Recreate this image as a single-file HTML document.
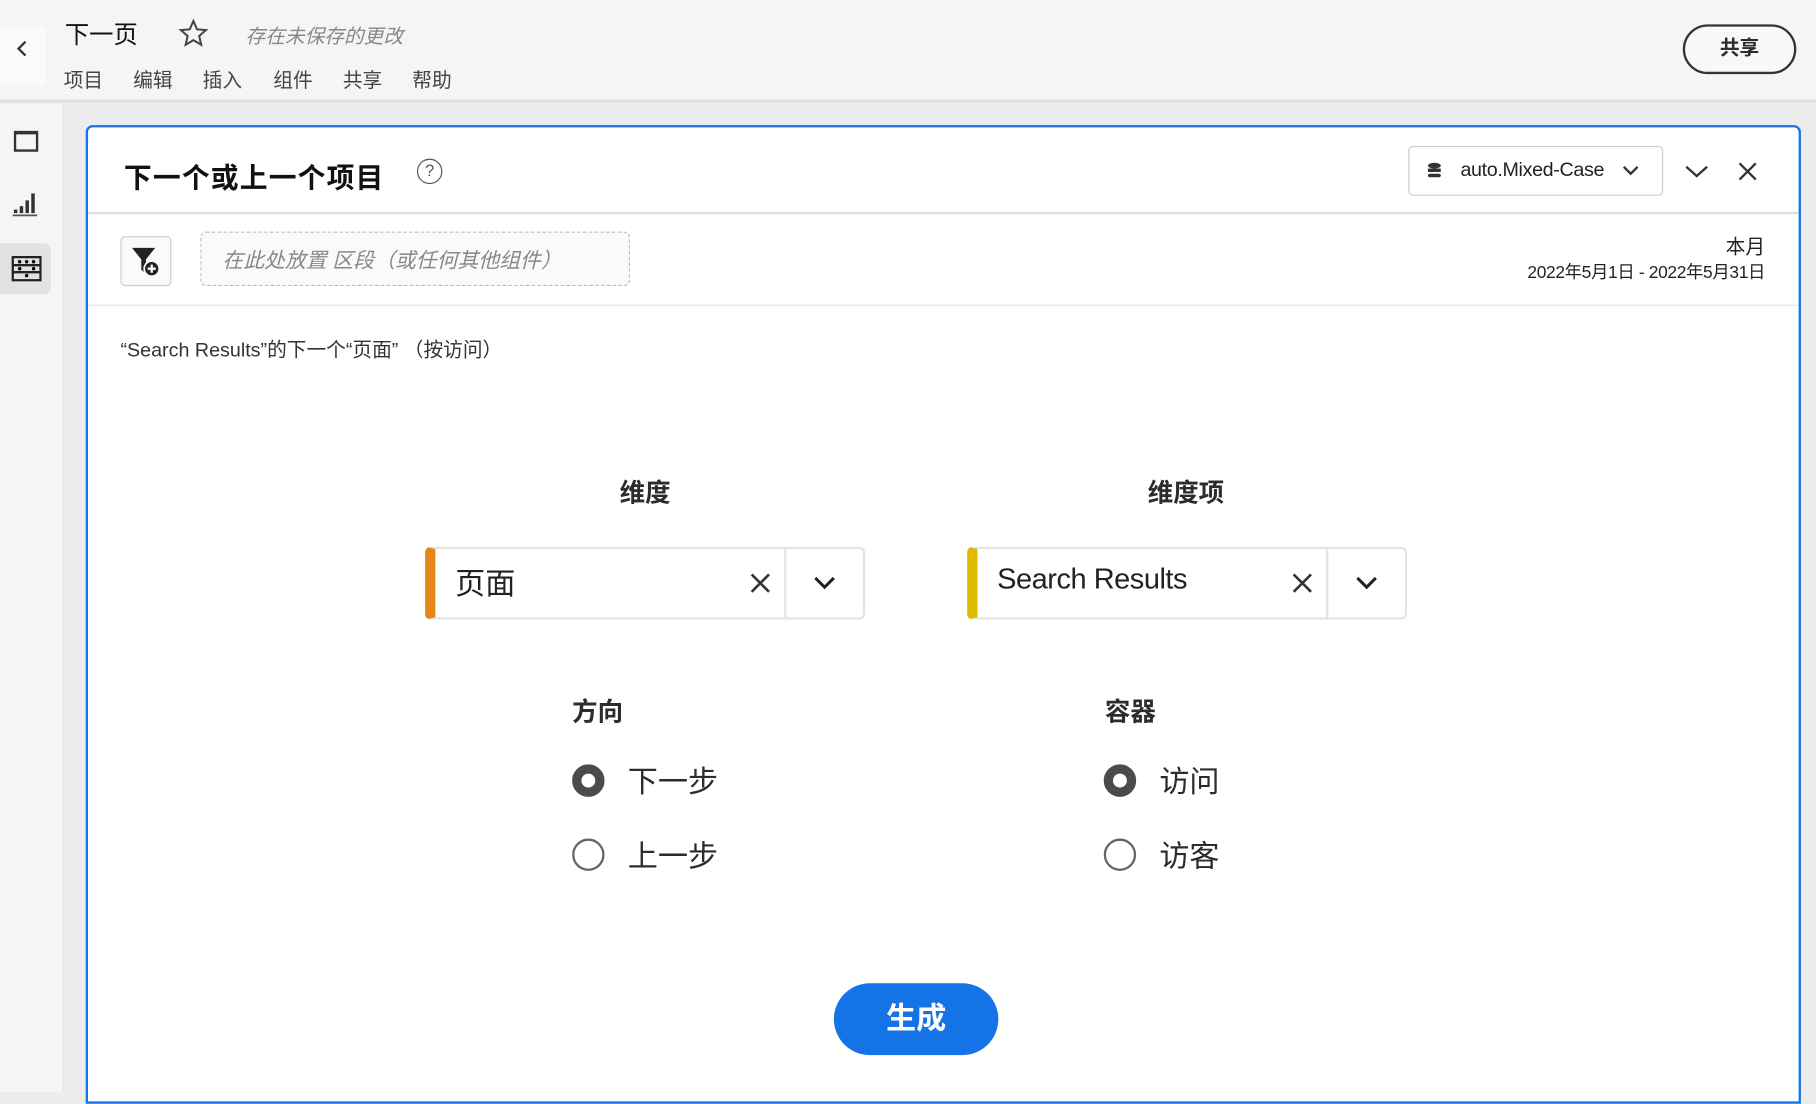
<!DOCTYPE html>
<html><head><meta charset="utf-8"><style>
*{margin:0;padding:0;box-sizing:border-box}
html,body{width:1816px;height:1092px;overflow:hidden;background:#ececec}
body{font-family:"Liberation Sans","Noto Sans CJK SC",sans-serif;color:#2c2c2c}
#w{position:absolute;left:0;top:0;width:1568px;height:943px;transform:scale(1.15816);transform-origin:0 0;background:#ececec}
.a{position:absolute;white-space:nowrap}
.m{position:absolute;top:55px;font-size:17px;color:#444}
</style></head><body><div id="w">
<div class="a" style="left:0;top:0;width:1568px;height:88px;background:#f5f5f5;border-bottom:2px solid #e0e0e0"></div>
<div class="a" style="left:0;top:22px;width:40px;height:52px;background:#fafafa;border-radius:0 6px 6px 0"></div>
<svg class="a" style="left:13px;top:35px" width="12" height="14"><path d="M9 1L3 7l6 6" stroke="#333" stroke-width="2" fill="none"/></svg>
<div class="a" style="left:56px;top:14px;font-size:21px;color:#111">下一页</div>
<svg class="a" style="left:154px;top:16px" width="26" height="26" viewBox="0 0 24 24"><path d="M12 2l2.9 6.6 7.1.6-5.4 4.7 1.6 7-6.2-3.7-6.2 3.7 1.6-7L2 9.2l7.1-.6z" stroke="#444" stroke-width="1.6" fill="none"/></svg>
<div class="a" style="left:212px;top:17px;font-size:17px;color:#888;font-style:italic">存在未保存的更改</div>
<div class="m" style="left:55px">项目</div><div class="m" style="left:115px">编辑</div><div class="m" style="left:175px">插入</div><div class="m" style="left:236px">组件</div><div class="m" style="left:296px">共享</div><div class="m" style="left:356px">帮助</div>
<div class="a" style="left:1453px;top:21px;width:98px;height:43px;border:2px solid #333;border-radius:22px;font-size:17px;font-weight:bold;text-align:center;line-height:38px;background:#f8f8f8">共享</div>
<div class="a" style="left:0;top:90px;width:55px;height:853px;background:#f5f5f5;border-right:1px solid #e2e2e2"></div>
<div class="a" style="left:12px;top:113px;width:21px;height:18px;border:2px solid #333;border-top-width:3px"></div>
<svg class="a" style="left:10px;top:164px" width="24" height="24"><path d="M1 22h21" stroke="#555" stroke-width="1.5"/><rect x="2" y="17" width="3" height="3" fill="#333"/><rect x="7" y="14" width="3" height="6" fill="#333"/><rect x="12" y="9" width="3" height="11" fill="#333"/><rect x="17" y="3" width="3" height="17" fill="#333"/></svg>
<div class="a" style="left:0;top:210px;width:44px;height:44px;background:#e2e2e2;border-radius:0 6px 6px 0"></div>
<svg class="a" style="left:10px;top:221px" width="26" height="22"><rect x="1" y="1" width="24" height="20" fill="none" stroke="#222" stroke-width="2"/><path d="M1 8h24M1 14h24" stroke="#222" stroke-width="2"/><circle cx="7" cy="5" r="1.5"/><circle cx="13" cy="5" r="1.5"/><circle cx="19" cy="5" r="1.5"/><circle cx="7" cy="11" r="1.5"/><circle cx="19" cy="11" r="1.5"/><circle cx="13" cy="17" r="1.5"/></svg>
<div class="a" style="left:74px;top:108px;width:1481px;height:845px;background:#fff;border:2px solid #1473e6;border-radius:6px 6px 0 0"></div>
<div class="a" style="left:107px;top:134px;font-size:24px;font-weight:bold;color:#111;letter-spacing:1px">下一个或上一个项目</div>
<div class="a" style="left:360px;top:137px;width:22px;height:22px;border:1.5px solid #555;border-radius:50%;font-size:14px;text-align:center;line-height:19px;color:#555">?</div>
<div class="a" style="left:1216px;top:126px;width:220px;height:43px;border:1px solid #ccc;border-radius:4px"></div>
<svg class="a" style="left:1232px;top:140px" width="13" height="15"><ellipse cx="6.5" cy="3" rx="5.5" ry="2.5" fill="#333"/><rect x="1" y="5.5" width="11" height="3" fill="#333"/><rect x="1" y="10" width="11" height="3" rx="1.5" fill="#333"/></svg>
<div class="a" style="left:1261px;top:137px;font-size:17px;color:#222;letter-spacing:-0.3px">auto.Mixed-Case</div>
<svg class="a" style="left:1401px;top:142px" width="14" height="10"><path d="M1 2l6 6 6-6" stroke="#333" stroke-width="2" fill="none"/></svg>
<svg class="a" style="left:1455px;top:142px" width="20" height="12"><path d="M1 2l9 8 9-8" stroke="#333" stroke-width="2" fill="none"/></svg>
<svg class="a" style="left:1501px;top:140px" width="16" height="16"><path d="M1 1l14 14M15 1L1 15" stroke="#333" stroke-width="2"/></svg>
<div class="a" style="left:76px;top:183px;width:1477px;height:2px;background:#ddd"></div>
<div class="a" style="left:104px;top:204px;width:44px;height:43px;border:1px solid #ccc;border-radius:4px;background:#fafafa"></div>
<svg class="a" style="left:112px;top:212px" width="30" height="28"><path d="M2 2h20l-8 10v12l-4-3V12z" fill="#222"/><circle cx="19" cy="20" r="6.5" fill="#222" stroke="#fafafa" stroke-width="1.5"/><path d="M19 16.5v7M15.5 20h7" stroke="#fff" stroke-width="2"/></svg>
<div class="a" style="left:173px;top:200px;width:371px;height:47px;border:1.5px dashed #bbb;border-radius:5px;background:#fafafa"></div>
<div class="a" style="left:192px;top:211px;font-size:18px;color:#888;font-style:italic">在此处放置 区段（或任何其他组件）</div>
<div class="a" style="left:1400px;top:199px;width:124px;text-align:right;font-size:17px;color:#222">本月</div>
<div class="a" style="left:1200px;top:224px;width:324px;text-align:right;font-size:15px;color:#222;letter-spacing:-0.3px">2022年5月1日 - 2022年5月31日</div>
<div class="a" style="left:76px;top:263px;width:1477px;height:1px;background:#e3e3e3"></div>
<div class="a" style="left:104px;top:288px;font-size:17px;color:#333">“Search Results”的下一个“页面” （按访问）</div>
<div class="a" style="left:457px;top:408px;width:200px;text-align:center;font-size:22px;font-weight:bold">维度</div>
<div class="a" style="left:924px;top:408px;width:200px;text-align:center;font-size:22px;font-weight:bold">维度项</div>
<div class="a" style="left:367px;top:472px;width:380px;height:63px;border:2px solid #e4e4e4;border-left:9px solid #e68619;border-radius:5px"></div>
<div class="a" style="left:393px;top:484px;font-size:26px;color:#222">页面</div>
<svg class="a" style="left:648px;top:495px" width="17" height="17"><path d="M1 1l15 15M16 1L1 16" stroke="#333" stroke-width="2.2"/></svg>
<div class="a" style="left:677px;top:474px;width:2px;height:59px;background:#e4e4e4"></div>
<svg class="a" style="left:702px;top:497px" width="20" height="12"><path d="M2 2l8 8 8-8" stroke="#222" stroke-width="2.6" fill="none"/></svg>
<div class="a" style="left:835px;top:472px;width:380px;height:63px;border:2px solid #e4e4e4;border-left:9px solid #dfbb00;border-radius:5px"></div>
<div class="a" style="left:861px;top:486px;font-size:25px;color:#222;letter-spacing:-0.4px">Search Results</div>
<svg class="a" style="left:1116px;top:495px" width="17" height="17"><path d="M1 1l15 15M16 1L1 16" stroke="#333" stroke-width="2.2"/></svg>
<div class="a" style="left:1145px;top:474px;width:2px;height:59px;background:#e4e4e4"></div>
<svg class="a" style="left:1170px;top:497px" width="20" height="12"><path d="M2 2l8 8 8-8" stroke="#222" stroke-width="2.6" fill="none"/></svg>
<div class="a" style="left:494px;top:597px;font-size:22px;font-weight:bold">方向</div>
<div class="a" style="left:954px;top:597px;font-size:22px;font-weight:bold">容器</div>
<div class="a" style="left:494px;top:660px;width:28px;height:28px;border:8px solid #4b4b4b;border-radius:50%"></div>
<div class="a" style="left:542px;top:655px;font-size:26px">下一步</div>
<div class="a" style="left:494px;top:724px;width:28px;height:28px;border:2.5px solid #666;border-radius:50%"></div>
<div class="a" style="left:542px;top:719px;font-size:26px">上一步</div>
<div class="a" style="left:953px;top:660px;width:28px;height:28px;border:8px solid #4b4b4b;border-radius:50%"></div>
<div class="a" style="left:1001px;top:655px;font-size:26px">访问</div>
<div class="a" style="left:953px;top:724px;width:28px;height:28px;border:2.5px solid #666;border-radius:50%"></div>
<div class="a" style="left:1001px;top:719px;font-size:26px">访客</div>
<div class="a" style="left:720px;top:849px;width:142px;height:62px;background:#1473e6;border-radius:31px;color:#fff;font-size:26px;font-weight:bold;text-align:center;line-height:60px">生成</div>
</div></body></html>
